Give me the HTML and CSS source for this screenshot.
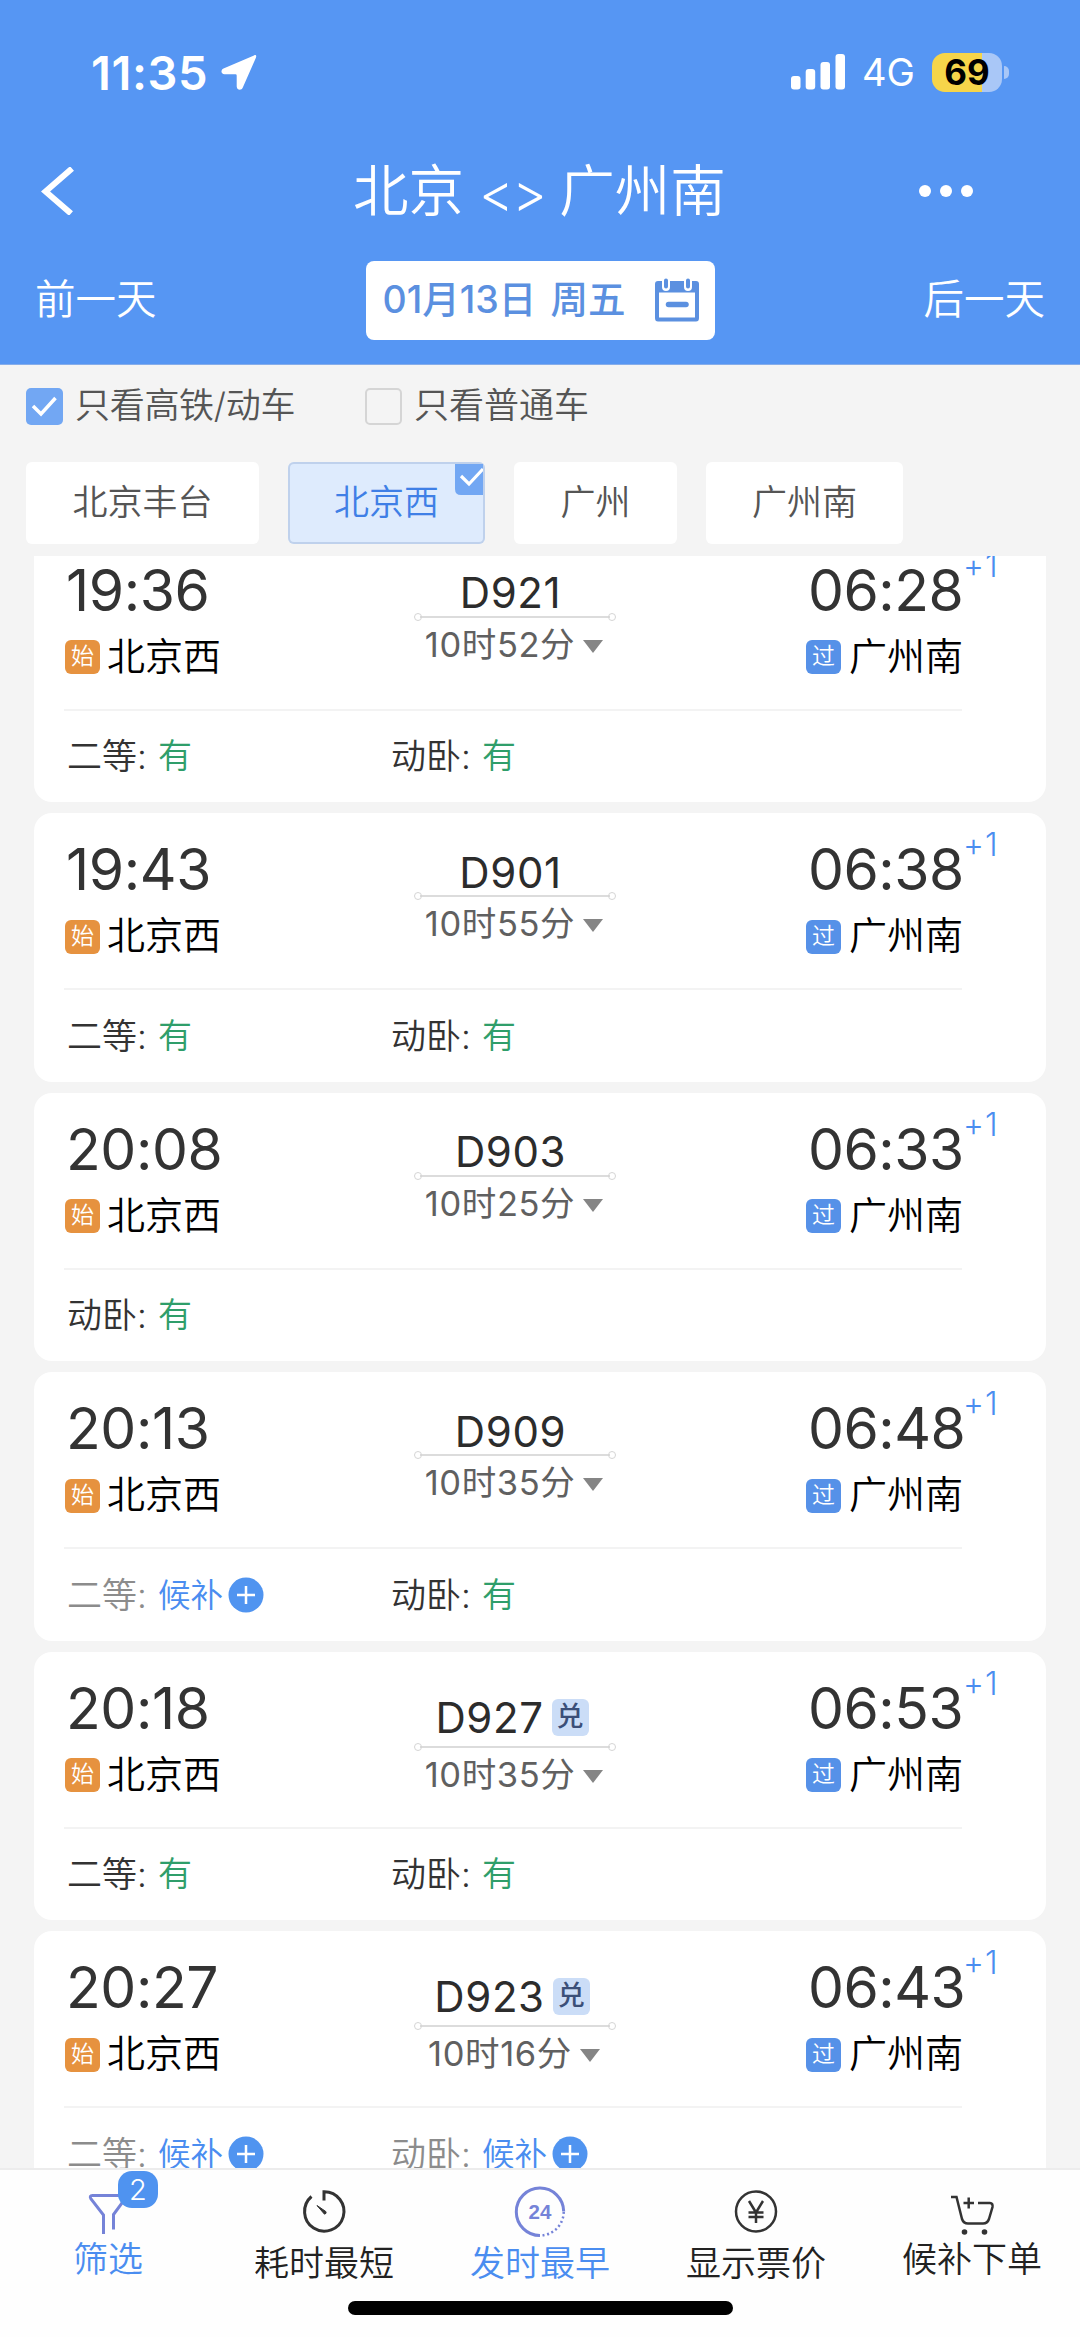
FILE: index.html
```html
<!DOCTYPE html>
<html lang="zh-CN">
<head>
<meta charset="utf-8">
<meta name="viewport" content="width=device-width">
<title>北京 - 广州南</title>
<link rel="stylesheet" href="styles.css">
</head>
<body>
<div class="screen">
  <header class="header">
    <div class="status">
      <span class="clock">11:35</span>
      <svg class="loc" viewBox="0 0 36 36"><path d="M33 1.500 2.500 14.500C-.5 16-.2 20 3.500 20.300H14.500Q15.700 20.300 15.700 21.500V32.500C16 36.500 20.500 36.800 21.800 33.500L34.800 4C35.800 1.500 35 .5 33 1.500Z" fill="#fff"/></svg>
      <svg class="signal" viewBox="0 0 54 36"><g fill="#fff"><rect y="22" width="9.500" height="13.500" rx="3"/><rect x="14.700" y="15" width="9.500" height="20.500" rx="3"/><rect x="29.500" y="8" width="9.500" height="27.500" rx="3"/><rect x="44.500" y="0" width="9.500" height="35.500" rx="3"/></g></svg>
      <span class="net">4G</span>
      <span class="battery">69</span>
      <span class="nub"></span>
    </div>
    <div class="nav">
      <svg class="back" viewBox="0 0 34 48"><path d="M31 1.500 4.500 24.500 30 46.500" fill="none" stroke="#fff" stroke-width="6"/></svg>
      <h1 class="title"><span>北京</span><span class="swap">&lt;&gt;</span><span>广州南</span></h1>
      <div class="more"><i></i><i></i><i></i></div>
    </div>
    <div class="dates">
      <span class="day">前一天</span>
      <div class="date"><span class="md">01月13日</span><span class="wk">周五</span>
        <svg class="cal" viewBox="0 0 44 44"><path d="M3 3H41Q44 3 44 6V40Q44 43.500 41 43.500H3Q0 43.500 0 40V6Q0 3 3 3ZM4 14.500V39.500H40V14.500Z" fill="#5b90e0" fill-rule="evenodd"/><g stroke-linecap="round"><path d="M11 3V9M33 3V9" stroke="#fff" stroke-width="8"/><path d="M11 2.500V8.500M33 2.500V8.500" stroke="#5b90e0" stroke-width="4"/><path d="M13.500 26.500H31" stroke="#5b90e0" stroke-width="5.500"/></g></svg>
      </div>
      <span class="day">后一天</span>
    </div>
  </header>

  <section class="filters">
    <div class="checks">
      <span class="box on"><svg viewBox="0 0 37 37"><path d="M7 18 15 26 29.500 10" fill="none" stroke="#fff" stroke-width="3.500"/></svg></span><span class="check-text first">只看高铁/动车</span>
      <span class="box"></span><span class="check-text">只看普通车</span>
    </div>
    <div class="stations">
      <span class="station wide">北京丰台</span>
      <span class="station active">北京西<svg class="corner" viewBox="0 0 28 31"><path d="M0 0H28V31H6Q0 31 0 25Z" fill="#72a7f3"/><path d="M6 12 14 20 28 5" fill="none" stroke="#fff" stroke-width="3.200"/></svg></span>
      <span class="station narrow">广州</span>
      <span class="station">广州南</span>
    </div>
  </section>

  <main class="list" id="list"></main>

  <nav class="tabs">
    <div class="tab blue raised">
      <svg class="icon" viewBox="0 0 54 54"><path d="M22.500 49V30L10 14Q8 10.500 11.500 10.500H44.500L44 14 32.500 29.500V44.500" fill="none" stroke="#7583d8" stroke-width="3"/></svg>
      <span class="count">2</span><span>筛选</span>
    </div>
    <div class="tab">
      <svg class="icon" viewBox="0 0 54 54"><path d="M14.500 11.500A19.700 19.700 0 1 0 27 6.800V15.500" fill="none" stroke="#333" stroke-width="3"/><path d="M20 20.500 28.800 26.500Q30 28.500 27.500 29.200Z" fill="#333" stroke="#333"/></svg>
      <span>耗时最短</span>
    </div>
    <div class="tab blue">
      <svg class="icon" viewBox="0 0 54 54"><path d="M27 50.500A23.700 23.700 0 1 1 50.700 26.500" fill="none" stroke="#7583d8" stroke-width="3"/><path d="M50.700 27A23.700 23.700 0 0 1 27 50.500" fill="none" stroke="#7583d8" stroke-width="2.500" stroke-dasharray="2 2.600"/><text x="27" y="33.500" text-anchor="middle" class="h24">24</text></svg>
      <span>发时最早</span>
    </div>
    <div class="tab">
      <svg class="icon" viewBox="0 0 54 54"><g fill="none" stroke="#333" stroke-width="2.500"><circle cx="27" cy="26.500" r="20"/><path d="M20 16 27 27.500 34 16M19.500 27.500H34.500M19.500 32H34.500M27 27V38"/></g></svg>
      <span>显示票价</span>
    </div>
    <div class="tab raised">
      <svg class="icon" viewBox="0 0 54 54"><g fill="none" stroke="#333" stroke-width="2.500"><path d="M6 12H11.500L17 34Q18.500 38.500 23 38.500H38Q42.500 38.500 44 34L47.500 22Q48 18 45 18H33M18.500 18H29M23.700 12.500V23.500"/></g><circle cx="19.500" cy="47" r="2.800" fill="#333"/><circle cx="39.500" cy="47" r="2.800" fill="#333"/></svg>
      <span>候补下单</span>
    </div>
  </nav>
  <div class="home"></div>
</div>
<script src="app.js"></script>
</body>
</html>
```
FILE: app.js
```js
const trains = [
  ["19:36", "06:28", "D921", "10时52分", 0, ["二等", 1], ["动卧", 1]],
  ["19:43", "06:38", "D901", "10时55分", 0, ["二等", 1], ["动卧", 1]],
  ["20:08", "06:33", "D903", "10时25分", 0, ["动卧", 1]],
  ["20:13", "06:48", "D909", "10时35分", 0, ["二等", 0], ["动卧", 1]],
  ["20:18", "06:53", "D927", "10时35分", 1, ["二等", 1], ["动卧", 1]],
  ["20:27", "06:43", "D923", "10时16分", 1, ["二等", 0], ["动卧", 0]]
];

const plus = '<svg class="plus" viewBox="0 0 36 36"><circle cx="18" cy="18" r="17.500" fill="#5094f0"/><path d="M9 18H27M18 9V27" stroke="#fff" stroke-width="2.500"/></svg>';

const seat = ([name, open]) => open
  ? `<div class="seat"><span class="kind">${name}:</span><span class="yes">有</span></div>`
  : `<div class="seat wait"><span class="kind">${name}:</span><span class="alt">候补</span>${plus}</div>`;

document.getElementById("list").innerHTML = trains.map(([dep, arr, no, dur, swap, ...seats]) => `
  <article class="card">
    <div class="trip">
      <div class="end"><div class="time">${dep}</div><div class="place"><b class="tag start">始</b><span>北京西</span></div></div>
      <div class="mid${swap ? " low" : ""}">
        <div class="no">${no}${swap ? '<b class="swap-tag">兑</b>' : ""}</div>
        <div class="rule"></div>
        <div class="dur">${dur}<svg class="tri" viewBox="0 0 20 13"><path d="M0 0H20L10 13Z" fill="#858585"/></svg></div>
      </div>
      <div class="end right"><div class="time">${arr}<span class="next">+1</span></div><div class="place"><b class="tag pass">过</b><span>广州南</span></div></div>
    </div>
    <div class="seats">${seats.map(seat).join("")}</div>
  </article>`).join("");
```
FILE: styles.css
```css
* { box-sizing: border-box; }
body {
  margin: 0;
  font-family: Inter, "Noto Sans CJK SC", sans-serif;
  color: #333;
  white-space: nowrap;
}
.screen {
  width: 1080px;
  height: 2337px;
  display: flex;
  flex-direction: column;
  background: #f4f4f4;
  overflow: hidden;
}

.header { height: 365px; flex: none; background: #5696f3; border-bottom: 1px solid #86adea; color: #fff; }
.status { height: 144px; padding: 0 71px 0 91px; display: flex; align-items: center; }
.clock { font-size: 47px; font-weight: 600; letter-spacing: .6px; width: 130px; }
.loc { width: 36px; height: 36px; }
.signal { width: 54px; height: 36px; margin-left: auto; }
.net { font-size: 38px; margin-left: 17px; width: 70px; }
.battery {
  width: 70px; height: 39px; border-radius: 13px; line-height: 39px; text-align: center;
  background: linear-gradient(90deg, #f6d54a 50px, #a9c7f7 50px);
  color: #000; font-size: 35px; font-weight: 700;
}
.nub { width: 5px; height: 13px; margin-left: 2px; border-radius: 0 6px 6px 0; background: #a9c7f7; }

.nav { height: 94px; padding: 0 107px 0 41px; display: flex; align-items: center; }
.back { width: 34px; height: 48px; }
.title { margin: 0 0 0 278px; display: flex; align-items: center; font-size: 55.5px; font-weight: 350; line-height: 80px; }
.swap { margin: 4px 14px 0 15px; font-size: 53px; letter-spacing: -1.5px; }
.more { display: flex; gap: 9px; margin-left: auto; }
.more i { width: 12px; height: 12px; border-radius: 50%; background: #fff; }

.dates { height: 124px; padding: 0 35px; display: flex; align-items: center; justify-content: space-between; }
.day { font-size: 40.5px; font-weight: 350; padding-bottom: 7px; }
.date { width: 349px; height: 79px; border-radius: 8px; background: #fff; color: #5b90e0; display: flex; align-items: center; padding-left: 17px; font-size: 37.5px; font-weight: 500; }
.md { width: 168px; padding-bottom: 7px; }
.wk { width: 104px; padding-bottom: 7px; }
.cal { width: 44px; height: 44px; }

.filters { height: 191px; flex: none; padding: 18px 26px 0; }
.checks { display: flex; align-items: center; height: 46px; font-size: 35px; font-weight: 350; color: #555; }
.box { width: 37px; height: 37px; border: 2px solid #d5d5d5; border-radius: 5px; }
.box.on { border: 0; background: #72a7f3; }
.box svg { display: block; }
.check-text { margin-left: 12px; padding-bottom: 8px; }
.check-text.first { width: 290px; letter-spacing: -.3px; }
.stations { display: flex; margin-top: 33px; gap: 29px; }
.station { position: relative; width: 197px; height: 82px; line-height: 80px; text-align: center; background: #fff; border-radius: 6px; font-size: 35px; font-weight: 350; color: #555; }
.station.wide { width: 233px; }
.station.narrow { width: 163px; }
.station.active { background: #deebfd; box-shadow: inset 0 0 0 2px #bfd1ec; color: #3f7fe6; }
.corner { position: absolute; right: 2px; top: 2px; width: 28px; height: 31px; }

.list { height: 1612px; flex: none; overflow: hidden; padding: 0 34px; display: flex; flex-direction: column; gap: 11px; }
.card { height: 268.5px; flex: none; border-radius: 18px; background: #fff; padding: 0 30px; }
.card:first-child { margin-top: -22.5px; }
.trip { display: flex; justify-content: space-between; height: 177px; width: 898px; border-bottom: 2px solid #f3f3f3; }
.end { width: 160px; padding-top: 27px; }
.time { position: relative; height: 60px; line-height: 60px; font-size: 57px; color: #333; padding-left: 2px; letter-spacing: -.4px; }
.right { width: 156px; }
.right .time { letter-spacing: -.5px; }
.next { position: absolute; left: 157px; top: -13px; line-height: 36px; font-size: 32px; font-weight: 350; letter-spacing: 1px; color: #4a8df0; }
.place { display: flex; align-items: center; height: 56px; margin-top: 6px; font-size: 38px; color: #000; font-weight: 350; }
.place span { padding-bottom: 3px; }
.tag { width: 35px; height: 34px; margin: 5px 7px 0 1px; border-radius: 6px; font-size: 23px; line-height: 32px; text-align: center; color: #fff; font-weight: 350; flex: none; }
.right .tag { margin-left: 0; margin-right: 8px; }
.start { background: #e6923f; }
.pass { background: #5691e8; }
.mid { width: 202px; padding-top: 38px; text-align: center; }
.mid.low { padding-top: 41px; }
.no { height: 42px; display: flex; justify-content: center; align-items: center; font-size: 42px; color: #2c2c2c; padding-right: 9px; letter-spacing: .6px; }
.low .no { height: 51px; padding-right: 6px; padding-bottom: 2px; }
.swap-tag { width: 37px; height: 37px; border-radius: 6px; margin-left: 8px; background: #cbddf7; color: #3b4f78; font-size: 27px; font-weight: 500; line-height: 35px; text-align: center; letter-spacing: 0; }
.rule {
  height: 6px; display: flex; align-items: center; justify-content: space-between;
  background: linear-gradient(#dcdcdc, #dcdcdc) center / 190px 2px no-repeat;
}
.rule::before, .rule::after { content: ""; width: 6px; height: 6px; border: 1.5px solid #d5d5d5; border-radius: 50%; }
.dur { height: 44px; display: flex; align-items: center; justify-content: center; font-size: 34.5px; font-weight: 370; color: #606060; letter-spacing: .6px; padding-right: 2px; }
.tri { width: 20px; height: 13px; margin: 9px 0 0 8px; }

.seats { display: flex; height: 92px; align-items: center; }
.seat { display: flex; align-items: center; width: 324px; padding-left: 3px; font-size: 35px; font-weight: 350; }
.seat span { padding-bottom: 6px; }
.kind { width: 91px; }
.yes { font-size: 34px; color: #2f9e6a; }
.alt { font-size: 32.5px; color: #4a8df0; }
.wait .kind { color: #8c8c8c; }
.plus { width: 36px; height: 36px; margin-left: 5px; }

.tabs { height: 133px; flex: none; display: grid; grid-template-columns: repeat(5, 1fr); background: #fefefe; border-top: 2px solid #ececec; font-size: 35px; font-weight: 350; color: #222; }
.tab { position: relative; display: flex; flex-direction: column; align-items: center; padding-top: 15px; line-height: 49px; }
.icon { width: 54px; height: 54px; }
.raised .icon { margin-bottom: -4px; }
.blue { color: #4a8df0; }
.count { position: absolute; left: 118px; top: 1px; width: 40px; height: 37px; border-radius: 14px; background: #4f93f0; color: #fff; font-size: 29px; line-height: 37px; text-align: center; }
.h24 { font: 700 20.5px "Liberation Sans", sans-serif; fill: #7583d8; }
.home { flex: 1; background: #fefefe; }
.home::before { content: ""; display: block; width: 385px; height: 14px; margin: 0 auto; border-radius: 7px; background: #000; }
```
